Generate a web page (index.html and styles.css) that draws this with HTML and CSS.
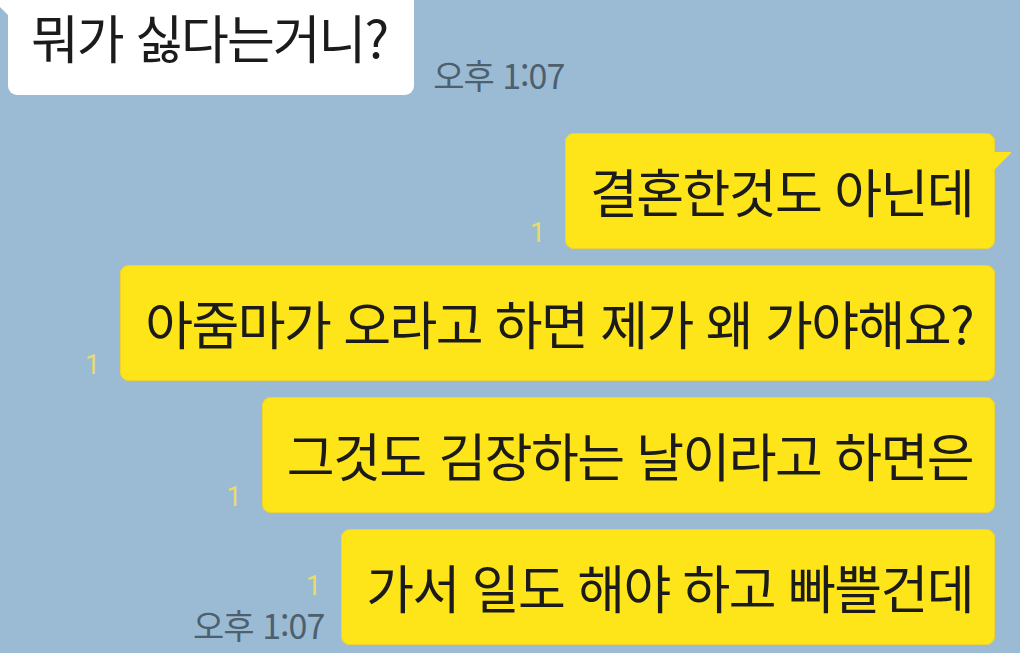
FILE: index.html
```html
<!DOCTYPE html>
<html lang="ko">
<head>
    <meta charset="UTF-8">
    <meta name="viewport" content="width=device-width, initial-scale=1.0">
    <title>채팅</title>
    <link rel="stylesheet" href="styles.css">
</head>
<body>
    <div id="chat">
        <div class="row theirs">
            <div class="bubble white">
                뭐가 싫다는거니?
                <svg class="tail left" width="20" height="22" viewBox="0 0 20 22"><path d="M20 0 L2 0 Q0 0 1.5 1.5 L20 20 Z" fill="#ffffff"/></svg>
            </div>
            <div class="meta"><span class="time">오후 1:07</span></div>
        </div>
        <div class="row mine first">
            <div class="meta"><span class="unread">1</span></div>
            <div class="bubble yellow">
                결혼한것도 아닌데
                <svg class="tail" width="20" height="22" viewBox="0 0 20 22"><path d="M0 0 L18 0 Q20 0 18.5 1.5 L0 20 Z" fill="#fee51a"/></svg>
            </div>
        </div>
        <div class="row mine">
            <div class="meta"><span class="unread">1</span></div>
            <div class="bubble yellow">아줌마가 오라고 하면 제가 왜 가야해요?</div>
        </div>
        <div class="row mine">
            <div class="meta"><span class="unread">1</span></div>
            <div class="bubble yellow">그것도 김장하는 날이라고 하면은</div>
        </div>
        <div class="row mine">
            <div class="meta last"><span class="unread">1</span><span class="time">오후 1:07</span></div>
            <div class="bubble yellow">가서 일도 해야 하고 빠쁠건데</div>
        </div>
    </div>
</body>
</html>
```

FILE: styles.css
```css
body {
    margin: 0;
    height: 100vh;
    overflow: hidden;
    background-color: #9bbbd4;
    font-family: "Noto Sans CJK KR", "Noto Sans", sans-serif;
}
#chat {
    display: flex;
    flex-direction: column;
    gap: 16px;
    margin-top: -21px;
    padding: 0 25px 0 8px;
}
.row {
    display: flex;
    align-items: flex-end;
}
.row.mine {
    justify-content: flex-end;
}
.row.first {
    margin-top: 22px;
}
.bubble {
    position: relative;
    font-size: 52px;
    line-height: 58px;
    letter-spacing: -1.6px;
    color: #1b1b1b;
    padding: 29px 22px 29px 25px;
    border-radius: 9px;
    white-space: nowrap;
}
.white {
    background-color: #ffffff;
    letter-spacing: -2px;
    padding-right: 27px;
    padding-left: 23px;
}
.yellow {
    background-color: #fee51a;
    box-shadow: inset 0 0 0 1px #edd230;
}
.tail {
    position: absolute;
    top: 19px;
    right: -17px;
}
.tail.left {
    right: auto;
    left: -17px;
}
.meta {
    display: flex;
    flex-direction: column;
    align-items: flex-end;
    gap: 4px;
    padding: 0 20px 1px;
}
.meta.last {
    padding: 0 17px 0;
}
.theirs .meta {
    padding: 0 19px 0;
}
.unread {
    font-size: 27px;
    line-height: 30px;
    color: #e6dc6e;
    font-family: "Roboto", sans-serif;
}
.last .unread {
    margin-right: 3px;
}
.time {
    font-size: 34px;
    line-height: 40px;
    letter-spacing: -1px;
    color: #4e5f6e;
}
```
